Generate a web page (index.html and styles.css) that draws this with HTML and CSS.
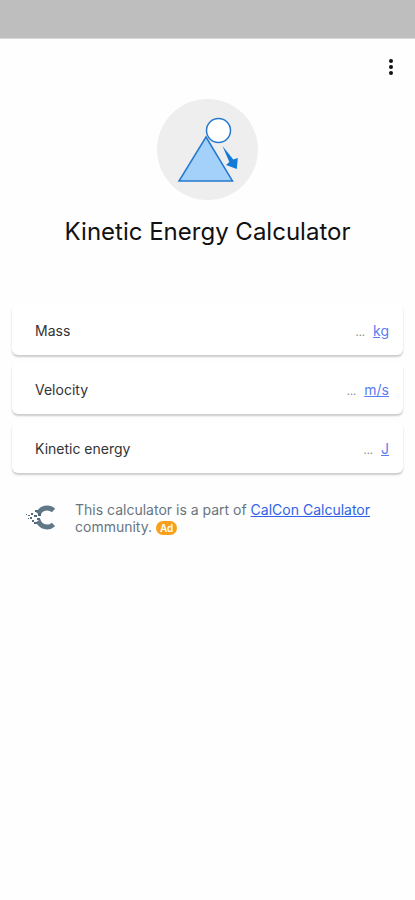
FILE: index.html
```html
<!DOCTYPE html>
<html lang="en">
<head>
    <meta charset="UTF-8">
    <meta name="viewport" content="width=device-width, initial-scale=1.0">
    <title>Kinetic Energy Calculator</title>
    <link rel="stylesheet" href="styles.css">
</head>
<body>
    <div class="status-bar"></div>

    <header>
        <button type="button" class="menu-btn" aria-label="Menu">
            <svg width="6" height="18" viewBox="0 0 6 18" fill="#111">
                <circle cx="3" cy="3" r="2"/>
                <circle cx="3" cy="9" r="2"/>
                <circle cx="3" cy="15" r="2"/>
            </svg>
        </button>
        <svg class="logo" viewBox="0 0 101 101">
            <circle cx="50.5" cy="50.5" r="50.5" fill="#eeeeee"/>
            <path d="M49 38 L75.5 82 H22 Z" fill="#a3d1fa" stroke="#2479cf" stroke-width="1.5"/>
            <circle cx="61.5" cy="31.5" r="12" fill="#fff" stroke="#2479cf" stroke-width="1.5"/>
            <path d="M65.5 47 L76.3 60.5 L80.8 59 L79.8 70 L69 66 L72.3 63 Z" fill="#137ad8"/>
        </svg>
        <h1>Kinetic Energy Calculator</h1>
    </header>

    <main>
        <form class="fields">
            <div class="field">
                <label for="mass">Mass</label>
                <input type="text" id="mass" inputmode="decimal" placeholder="...">
                <a href="#mass">kg</a>
            </div>
            <div class="field">
                <label for="velocity">Velocity</label>
                <input type="text" id="velocity" inputmode="decimal" placeholder="...">
                <a href="#velocity">m/s</a>
            </div>
            <div class="field">
                <label for="energy">Kinetic energy</label>
                <input type="text" id="energy" inputmode="decimal" placeholder="...">
                <a href="#energy">J</a>
            </div>
        </form>

        <div class="promo">
            <svg class="promo-logo" width="32" height="26" viewBox="0 0 32 26">
                <path d="M27.5 6.5 A9.5 9.5 0 1 0 27.5 20.5" fill="none" stroke="#607787" stroke-width="5"/>
                <path d="M5 5 L17 13 L5 22 Z" fill="#fff"/>
                <g fill="#546b7b">
                    <rect x="9" y="6" width="3" height="2"/>
                    <rect x="12" y="9" width="3" height="3"/>
                    <rect x="8" y="11" width="3" height="2"/>
                    <rect x="11" y="14" width="3" height="2"/>
                    <rect x="8" y="18" width="3" height="2"/>
                    <rect x="5" y="9" width="2" height="2"/>
                    <rect x="4" y="13" width="2" height="2"/>
                    <rect x="6" y="16" width="2" height="2"/>
                    <rect x="2" y="11" width="2" height="1"/>
                    <rect x="2" y="14" width="1" height="1"/>
                    <rect x="0" y="10" width="1" height="1"/>
                </g>
            </svg>
            <p>This calculator is a part of <a href="#">CalCon Calculator</a> community. <span class="ad">Ad</span></p>
        </div>
    </main>
</body>
</html>
```

FILE: styles.css
```css
* {
    margin: 0;
    padding: 0;
    box-sizing: border-box;
}

body {
    font-family: Inter, 'Liberation Sans', sans-serif;
    font-size: 14px;
    color: #333;
    background-color: #fefefe;
}

.status-bar {
    height: 39px;
    background-color: #bebebe;
    border-bottom: 1px solid #d8d8d8;
}

header {
    display: flex;
    flex-direction: column;
    align-items: center;
    padding: 16px 12px 0;
}

.menu-btn {
    align-self: flex-end;
    display: flex;
    justify-content: center;
    width: 24px;
    padding: 3px 0;
    border: none;
    background: none;
    cursor: pointer;
}

.logo {
    width: 101px;
    height: 101px;
    margin-top: 20px;
}

h1 {
    margin-top: 16px;
    font-size: 24px;
    font-weight: 400;
    line-height: 32px;
    color: #111;
}

main {
    padding: 56px 12px 24px;
}

.fields {
    display: flex;
    flex-direction: column;
    gap: 8px;
}

.field {
    display: flex;
    align-items: center;
    height: 51px;
    padding: 2px 14px 0 23px;
    background-color: #fff;
    border-radius: 6px;
    box-shadow: 0 2px 2px rgba(0, 0, 0, 0.2);
}

.field input {
    flex: 1;
    min-width: 0;
    margin-right: 8px;
    border: none;
    outline: none;
    background: none;
    font: inherit;
    text-align: right;
}

.field input::placeholder {
    color: #888;
    opacity: 1;
    font-size: 11px;
}

.field a {
    color: #5b7cf0;
}

.promo {
    display: flex;
    align-items: flex-start;
    gap: 17px;
    padding: 28px 16px 0 14px;
}

.promo-logo {
    flex-shrink: 0;
    margin-top: 3px;
}

.promo p {
    line-height: 17px;
    color: #68757f;
}

.promo a {
    color: #2f62e8;
}

.ad {
    display: inline-block;
    padding: 0 4px;
    border-radius: 7px;
    background-color: #f9a11b;
    color: #fff;
    font-size: 10px;
    font-weight: 600;
    line-height: 14px;
}
```
